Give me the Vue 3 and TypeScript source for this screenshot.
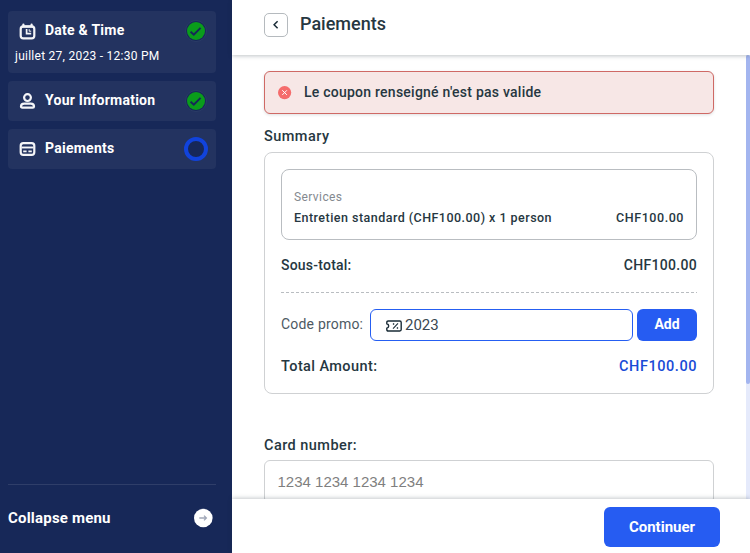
<script setup lang="ts">
import { ref } from 'vue'

interface Step {
  id: string
  label: string
  detail?: string
  done: boolean
}

const steps: Step[] = [
  { id: 'date', label: 'Date & Time', detail: 'juillet 27, 2023 - 12:30 PM', done: true },
  { id: 'info', label: 'Your Information', done: true },
  { id: 'pay', label: 'Paiements', done: false },
]

const coupon = ref('2023')
const cardNumber = ref('')
</script>

<template>
  <div class="booking">
    <aside class="sidebar">
      <nav class="steps">
        <div v-for="step in steps" :key="step.id" class="step">
          <div class="step-head">
            <svg v-if="step.id === 'date'" class="step-icon" viewBox="0 0 18 18" fill="none" stroke="#f4f5f8">
              <rect x="1.700" y="4.400" width="13.600" height="12" rx="2.600" stroke-width="2.200" />
              <path d="M3.500 4.700h10M4.400 2.600v2M12.600 2.600v2" stroke-width="2.200" stroke-linecap="round" />
              <path d="M7.600 7v4.700h4.600" stroke-width="1.700" />
              <path d="M10.200 7.200v2h2" stroke-width="1" />
            </svg>
            <svg v-else-if="step.id === 'info'" class="step-icon" viewBox="0 0 18 18" fill="none" stroke="#f4f5f8" stroke-width="2.200">
              <circle cx="8.500" cy="5.600" r="3.400" />
              <path d="M5.200 11.700h6.600c1.900 0 3.200 1.200 3.200 2.700 0 .8-.5 1.200-1.200 1.200H3.200c-.7 0-1.200-.4-1.200-1.200 0-1.500 1.300-2.700 3.200-2.700z" />
            </svg>
            <svg v-else class="step-icon" viewBox="0 0 18 18" fill="none" stroke="#f4f5f8">
              <rect x="1.700" y="3.100" width="13.600" height="11.800" rx="2.600" stroke-width="2.200" />
              <path d="M2.500 7.500h12" stroke-width="1.900" />
              <path d="M4.200 11.300h3.400M9.400 11.300h3.400" stroke-width="1.700" />
            </svg>
            <span class="step-label">{{ step.label }}</span>
            <svg v-if="step.done" class="step-state" viewBox="0 0 24 24">
              <circle cx="12" cy="12" r="10.500" fill="#172858" stroke="#2b3c67" stroke-width="1" />
              <circle cx="12" cy="12" r="9" fill="#0a9c1b" />
              <path d="M6.600 12.700l3.200 3 6.800-6.800" fill="none" stroke="#172858" stroke-width="2" />
            </svg>
            <svg v-else class="step-state" viewBox="0 0 24 24">
              <circle cx="12" cy="12" r="10" fill="#172858" stroke="#1143dc" stroke-width="4" />
            </svg>
          </div>
          <div v-if="step.detail" class="step-detail">{{ step.detail }}</div>
        </div>
      </nav>
      <div class="collapse">
        <span>Collapse menu</span>
        <svg class="collapse-icon" viewBox="0 0 20 20">
          <circle cx="10.300" cy="10" r="9.300" fill="#fff" />
          <path d="M6.300 10h7M11 7.600l2.400 2.400-2.400 2.400" fill="none" stroke="#a0a7b8" stroke-width="1.300" />
        </svg>
      </div>
    </aside>

    <main class="panel">
      <header class="panel-head">
        <button class="back" aria-label="Retour">
          <svg viewBox="0 0 10 10"><path d="M6.600 1.200L3.100 4.700l3.500 3.500" fill="none" stroke="#1a2c37" stroke-width="1.500" /></svg>
        </button>
        <h1>Paiements</h1>
      </header>

      <section class="content">
        <div class="scroll-track"><div class="scroll-thumb"></div></div>
        <div class="alert">
          <svg class="alert-icon" viewBox="0 0 14 14">
            <circle cx="6.600" cy="6.600" r="6.600" fill="#f56c6c" />
            <path d="M4.300 4.300l4.600 4.600M8.900 4.300L4.300 8.900" stroke="#fff" stroke-width="1" />
          </svg>
          <span>Le coupon renseigné n'est pas valide</span>
        </div>

        <h2 class="section-title">Summary</h2>
        <div class="summary">
          <div class="services">
            <div class="services-title">Services</div>
            <div class="service-row">
              <span>Entretien standard (CHF100.00) x 1 person</span>
              <span class="service-price">CHF100.00</span>
            </div>
          </div>
          <div class="line subtotal"><span>Sous-total:</span><span class="subtotal-price">CHF100.00</span></div>
          <svg class="divider" viewBox="0 0 416 1"><path d="M0 .5h416" stroke="#b9bdc1" stroke-dasharray="3 2" /></svg>
          <div class="promo">
            <label for="coupon">Code promo:</label>
            <div class="coupon-field">
              <svg class="coupon-icon" viewBox="0 0 16 12" fill="none" stroke="#1a2c37">
                <path d="M2.200 1h11.600q1.400 0 1.400 1.400v7.200q0 1.400-1.400 1.400H2.200Q.8 11 .8 9.600V8.200Q2.700 7.700 2.700 6T.8 3.800V2.400Q.8 1 2.200 1z" stroke-width="1.400" />
                <path d="M7 8.700l5-5.400" stroke-width="1.100" />
                <circle cx="7.600" cy="4" r=".5" stroke-width="1" />
                <circle cx="11.400" cy="8" r=".5" stroke-width="1" />
              </svg>
              <input id="coupon" v-model="coupon" type="text" />
            </div>
            <button class="add">Add</button>
          </div>
          <div class="line total"><span>Total Amount:</span><span class="amount">CHF100.00</span></div>
        </div>

        <label class="card-label" for="card">Card number:</label>
        <input id="card" v-model="cardNumber" class="card-input" placeholder="1234 1234 1234 1234" />
      </section>

      <footer class="panel-foot"><button class="continue">Continuer</button></footer>
    </main>
  </div>
</template>

<style>
body {
  margin: 0;
  overflow: hidden;
}
</style>

<style scoped>
.booking {
  display: flex;
  width: 750px;
  height: 553px;
  background: #fff;
  color: #263741;
  font-family: Roboto, "Liberation Sans", sans-serif;
}
.booking * {
  box-sizing: border-box;
}
button,
input {
  margin: 0;
  padding: 0;
  border: 0;
  background: none;
  font-family: inherit;
  color: inherit;
  outline: none;
}
.sidebar {
  display: flex;
  flex-direction: column;
  justify-content: space-between;
  width: 232px;
  padding: 11px 16px 0 8px;
  background: #172858;
  color: #fff;
}
.steps {
  display: flex;
  flex-direction: column;
  gap: 8px;
}
.step {
  height: 40px;
  padding: 8px 8px 0 11px;
  border-radius: 4px;
  background: #233360;
}
.step:first-child {
  height: 62px;
}
.step-head {
  display: flex;
  align-items: center;
  height: 24px;
}
.step-icon {
  width: 18px;
  height: 18px;
}
.step-label {
  flex: 1;
  margin: -2px 0 0 8px;
  font-size: 14px;
  font-weight: 700;
  line-height: 20px;
  letter-spacing: 0.25px;
}
.step-state {
  width: 24px;
  height: 24px;
}
.step-detail {
  margin: 4px 0 0 -4px;
  font-size: 12px;
  line-height: 18px;
  letter-spacing: 0.26px;
  white-space: nowrap;
}
.collapse {
  display: flex;
  align-items: center;
  justify-content: space-between;
  height: 69px;
  padding: 0 3px 2px 0;
  border-top: 1px solid #2f3e69;
  font-size: 15px;
  font-weight: 700;
  letter-spacing: 0.2px;
}
.collapse-icon {
  width: 20px;
  height: 20px;
}
.panel {
  display: flex;
  flex-direction: column;
  width: 518px;
}
.panel-head {
  display: flex;
  z-index: 1;
  flex: none;
  height: 55px;
  padding: 13px 32px 0;
  background: #fff;
  box-shadow: 0 1px 4px rgba(26, 44, 55, 0.28);
}
.back {
  display: flex;
  align-items: center;
  justify-content: center;
  width: 24px;
  height: 24px;
  border: 1px solid #b5babe;
  border-radius: 5px;
}
.back svg {
  width: 10px;
  height: 10px;
}
h1 {
  margin: -1px 0 0 12px;
  font-size: 18px;
  font-weight: 500;
  line-height: 24px;
}
.content {
  position: relative;
  flex: 1;
  min-height: 0;
  padding: 16px 36px 0 32px;
  overflow: hidden;
}
.scroll-track {
  position: absolute;
  top: 0;
  right: 0;
  bottom: 0;
  width: 4px;
  background: #e5eafb;
}
.scroll-thumb {
  height: 329px;
  border-radius: 3px;
  background: #a3b5ef;
}
.alert {
  display: flex;
  align-items: center;
  height: 43px;
  padding: 0 13px;
  border: 1px solid #cf6965;
  border-radius: 6px;
  background: #f7e7e6;
  box-shadow: 0 1px 3px rgba(26, 44, 55, 0.15);
  font-size: 14px;
  font-weight: 500;
  letter-spacing: 0.24px;
}
.alert span {
  margin-bottom: 2px;
}
.alert-icon {
  width: 14px;
  height: 14px;
  margin-right: 12px;
}
.section-title {
  margin: 13px 0 5px;
  font-size: 14.5px;
  font-weight: 500;
  line-height: 20px;
  letter-spacing: 0.45px;
}
.summary {
  height: 242px;
  padding: 16px;
  border: 1px solid #cfd1d3;
  border-radius: 8px;
}
.services {
  height: 71px;
  padding: 18px 12px 0;
  border: 1px solid #b9bdc1;
  border-radius: 8px;
}
.services-title {
  color: #84898f;
  font-size: 12px;
  line-height: 18px;
  letter-spacing: 0.4px;
}
.service-row {
  display: flex;
  justify-content: space-between;
  margin-top: 2px;
  font-size: 12.5px;
  font-weight: 500;
  line-height: 20px;
  letter-spacing: 0.47px;
}
.service-price {
  letter-spacing: 0.56px;
}
.line {
  display: flex;
  justify-content: space-between;
  height: 20px;
  font-size: 14px;
  font-weight: 500;
  line-height: 20px;
  letter-spacing: 0.22px;
}
.subtotal {
  margin-top: 15px;
}
.subtotal-price {
  letter-spacing: 0.3px;
}
.divider {
  display: block;
  width: 416px;
  height: 1px;
  margin-top: 17px;
}
.promo {
  display: flex;
  height: 32px;
  margin-top: 16px;
}
.promo label {
  width: 89px;
  color: #4d5963;
  font-size: 14px;
  line-height: 30px;
  letter-spacing: 0.2px;
}
.coupon-field {
  display: flex;
  align-items: center;
  width: 263px;
  padding-left: 15px;
  border: 1px solid #255ef2;
  border-radius: 6px;
}
.coupon-icon {
  width: 16px;
  height: 12px;
  margin-top: 2px;
}
.coupon-field input {
  width: 200px;
  margin-left: 3px;
  color: #3a4852;
  font-size: 15px;
}
.add {
  width: 60px;
  margin-left: 4px;
  padding-bottom: 2px;
  border-radius: 6px;
  background: #265cf2;
  color: #fff;
  font-size: 14px;
  font-weight: 700;
}
.total {
  margin-top: 16px;
  font-size: 14.5px;
  letter-spacing: 0.4px;
}
.amount {
  color: #194bd6;
  letter-spacing: 0.55px;
}
.card-label {
  display: block;
  margin-top: 42px;
  font-size: 14.5px;
  font-weight: 500;
  line-height: 20px;
  letter-spacing: 0.45px;
}
.card-input {
  display: block;
  width: 450px;
  height: 44px;
  margin-top: 4px;
  padding: 0 12.5px 2px;
  border: 1px solid #cfd1d3;
  border-radius: 6px;
  font-family: "Liberation Sans", sans-serif;
  font-size: 15px;
}
.card-input::placeholder {
  color: #7f7f7f;
}
.panel-foot {
  display: flex;
  z-index: 1;
  flex: none;
  justify-content: flex-end;
  height: 54px;
  padding: 8px 30px 0;
  background: #fff;
  box-shadow: 0 -1px 4px rgba(26, 44, 55, 0.25);
}
.continue {
  width: 116px;
  height: 40px;
  border-radius: 6px;
  background: #265cf2;
  color: #fff;
  font-size: 15px;
  font-weight: 700;
}
</style>
